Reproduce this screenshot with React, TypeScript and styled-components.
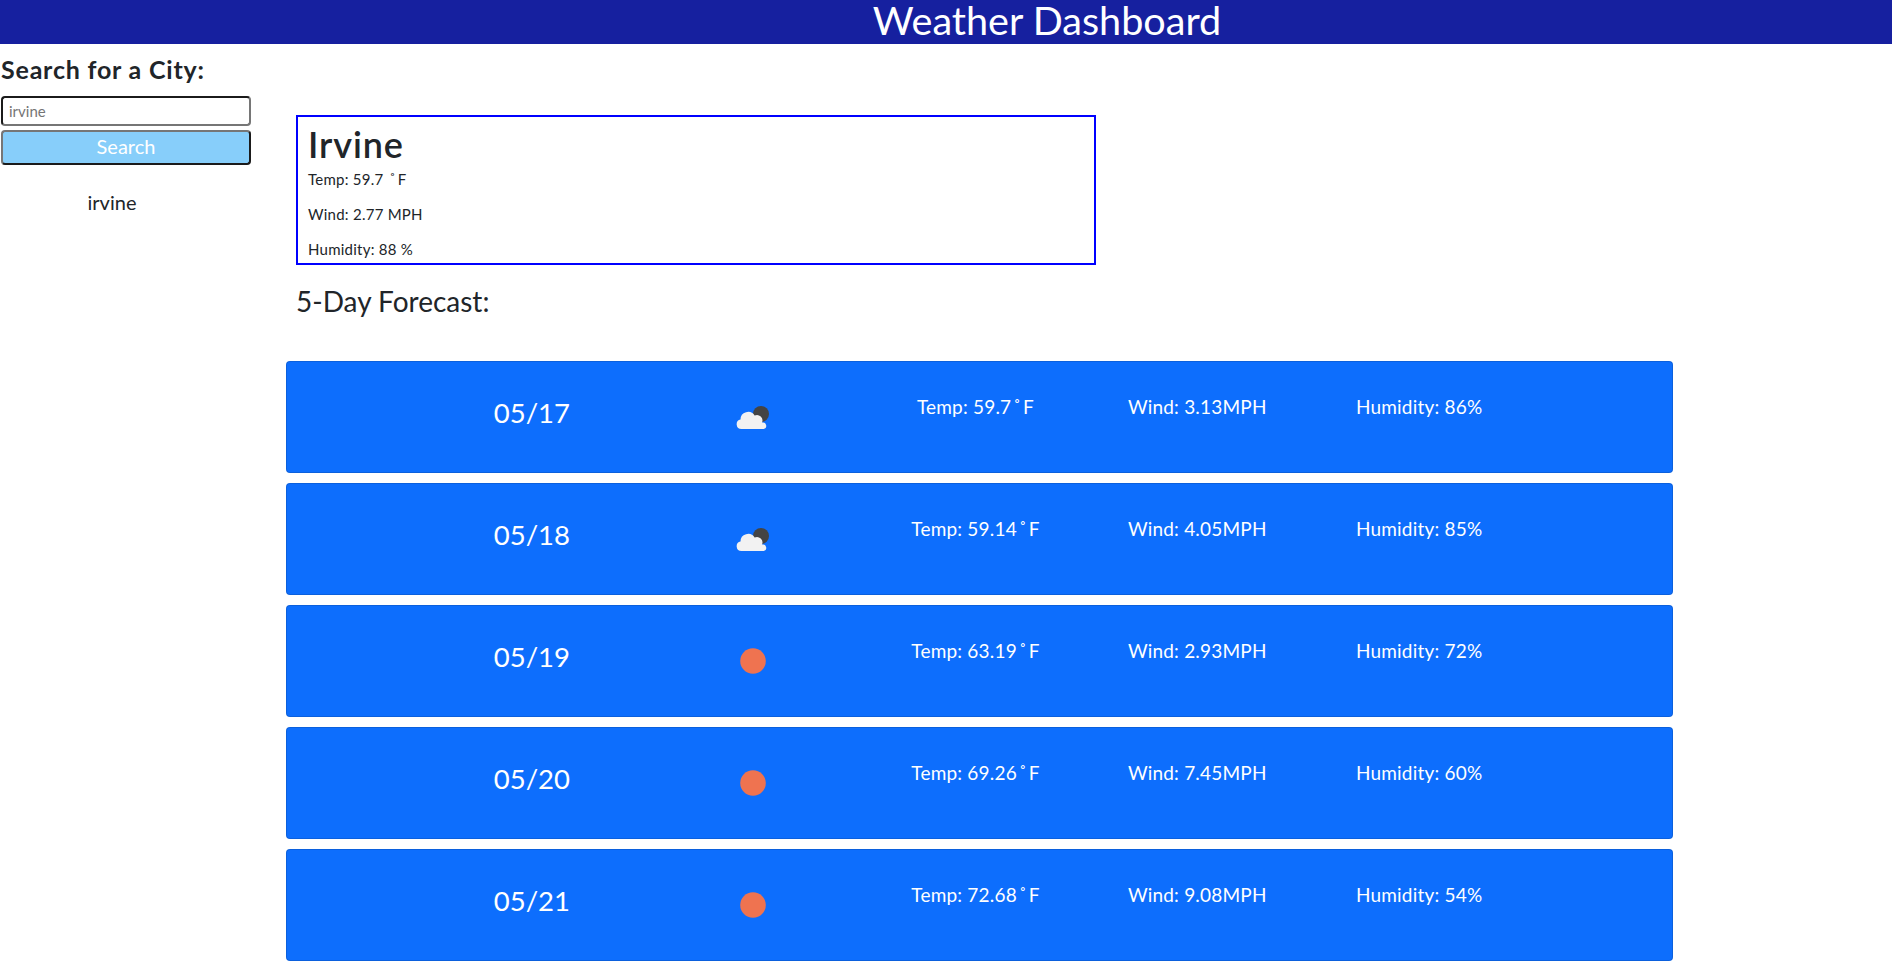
import React from "react";
import styled, { createGlobalStyle } from "styled-components";

const Global = createGlobalStyle`
  html, body { margin: 0; padding: 0; background: #fff; }
  body { font-family: Lato, "Noto Sans", sans-serif; color: #212529; overflow: hidden; }
  * { box-sizing: border-box; }
`;

const Header = styled.header`
  height: 44px;
  background: #16209f;
  color: #fff;
  font-size: 39.6px;
  line-height: 39px;
  padding-left: 202px;
  text-align: center;
`;

const Layout = styled.div`
  display: flex;
  align-items: flex-start;
`;

const Sidebar = styled.aside`
  width: 286px;
  flex: none;
  padding: 11px 0 0 1px;
`;

const SideTitle = styled.h2`
  margin: 0 0 12px;
  font-size: 25px;
  line-height: 29px;
  font-weight: 700;
  letter-spacing: 0.8px;
`;

const SearchInput = styled.input`
  display: block;
  width: 250px;
  height: 30px;
  padding: 1px 6px;
  border: 2px solid;
  border-color: #1b1b1b #767676 #767676 #1b1b1b;
  border-radius: 4px;
  background: #fff;
  font: 15px Lato, sans-serif;
  color: #212529;
  &::placeholder { color: #757575; opacity: 1; }
`;

const SearchButton = styled.button`
  display: block;
  width: 250px;
  height: 35px;
  margin-top: 4px;
  padding: 0 0 3px;
  border: 2px solid;
  border-color: #767676 #1b1b1b #1b1b1b #767676;
  border-radius: 4px;
  background: #87cefa;
  color: #fff;
  font: 20px Lato, sans-serif;
`;

const History = styled.div`
  width: 222px;
  margin-top: 24px;
  text-align: center;
  font-size: 20px;
  line-height: 26px;
`;

const Main = styled.main`
  flex: 1;
  min-width: 0;
`;

const Current = styled.section`
  width: 800px;
  height: 150px;
  margin: 71px 0 0 10px;
  padding: 4px 10px 0;
  border: 2px solid #0000ff;
  overflow: hidden;
`;

const CityName = styled.h1`
  margin: 0 0 2px;
  font-size: 36px;
  line-height: 47px;
  font-weight: 600;
  letter-spacing: 0.9px;
`;

const Stat = styled.p`
  margin: 0 0 16px;
  font-size: 15px;
  line-height: 19px;
  letter-spacing: 0.25px;
`;

const Degree = styled.span`
  margin: 0 2px;
`;

const ForecastTitle = styled.h3`
  margin: 19px 0 0 10px;
  height: 77px;
  font-size: 28px;
  line-height: 34px;
  font-weight: 400;
`;

const Cards = styled.div`
  width: 1387px;
  display: flex;
  flex-direction: column;
  gap: 10px;
`;

const Card = styled.article`
  height: 112px;
  padding: 0 142px 0 134px;
  display: grid;
  grid-template-columns: repeat(5, 1fr);
  background: #0d6efd;
  border: 1px solid rgba(0, 0, 0, 0.125);
  border-radius: 4px;
  color: #fff;
  text-align: center;
`;

const DateText = styled.div`
  padding-top: 31px;
  font-size: 27.5px;
  line-height: 40px;
`;

const IconCell = styled.div`
  padding: 30px 2px 0 0;
  display: flex;
  justify-content: center;
`;

const Info = styled.div`
  padding-top: 32px;
  font-size: 19px;
  line-height: 26px;
  letter-spacing: 0.2px;
`;

const CloudyIcon = () => (
  <svg width="50" height="50" viewBox="0 0 50 50">
    <circle cx="33" cy="22" r="8" fill="#444" />
    <path
      d="M13.5 37A4.8 4.8 0 0 1 12.5 27.5A7.6 7.6 0 0 1 26.6 23.5A5.5 5.5 0 0 1 34 30.6A3.3 3.3 0 0 1 35.8 37Z"
      fill="#f2f2f2"
    />
  </svg>
);

const SunIcon = () => (
  <svg width="50" height="50" viewBox="0 0 50 50">
    <circle cx="25" cy="25" r="12.8" fill="#ef7350" />
  </svg>
);

const days = [
  { date: "05/17", kind: "cloud", temp: "59.7", wind: "3.13", hum: "86" },
  { date: "05/18", kind: "cloud", temp: "59.14", wind: "4.05", hum: "85" },
  { date: "05/19", kind: "sun", temp: "63.19", wind: "2.93", hum: "72" },
  { date: "05/20", kind: "sun", temp: "69.26", wind: "7.45", hum: "60" },
  { date: "05/21", kind: "sun", temp: "72.68", wind: "9.08", hum: "54" },
];

export default function App() {
  return (
    <>
      <Global />
      <Header>Weather Dashboard</Header>
      <Layout>
        <Sidebar>
          <SideTitle>Search for a City:</SideTitle>
          <SearchInput placeholder="irvine" />
          <SearchButton>Search</SearchButton>
          <History>irvine</History>
        </Sidebar>
        <Main>
          <Current>
            <CityName>Irvine</CityName>
            <Stat>Temp: 59.7 <Degree>˚</Degree>F</Stat>
            <Stat>Wind: 2.77 MPH</Stat>
            <Stat>Humidity: 88 %</Stat>
          </Current>
          <ForecastTitle>5-Day Forecast:</ForecastTitle>
          <Cards>
            {days.map((d) => (
              <Card key={d.date}>
                <DateText>{d.date}</DateText>
                <IconCell>{d.kind === "cloud" ? <CloudyIcon /> : <SunIcon />}</IconCell>
                <Info>Temp: {d.temp}<Degree>˚</Degree>F</Info>
                <Info>Wind: {d.wind}MPH</Info>
                <Info>Humidity: {d.hum}%</Info>
              </Card>
            ))}
          </Cards>
        </Main>
      </Layout>
    </>
  );
}
